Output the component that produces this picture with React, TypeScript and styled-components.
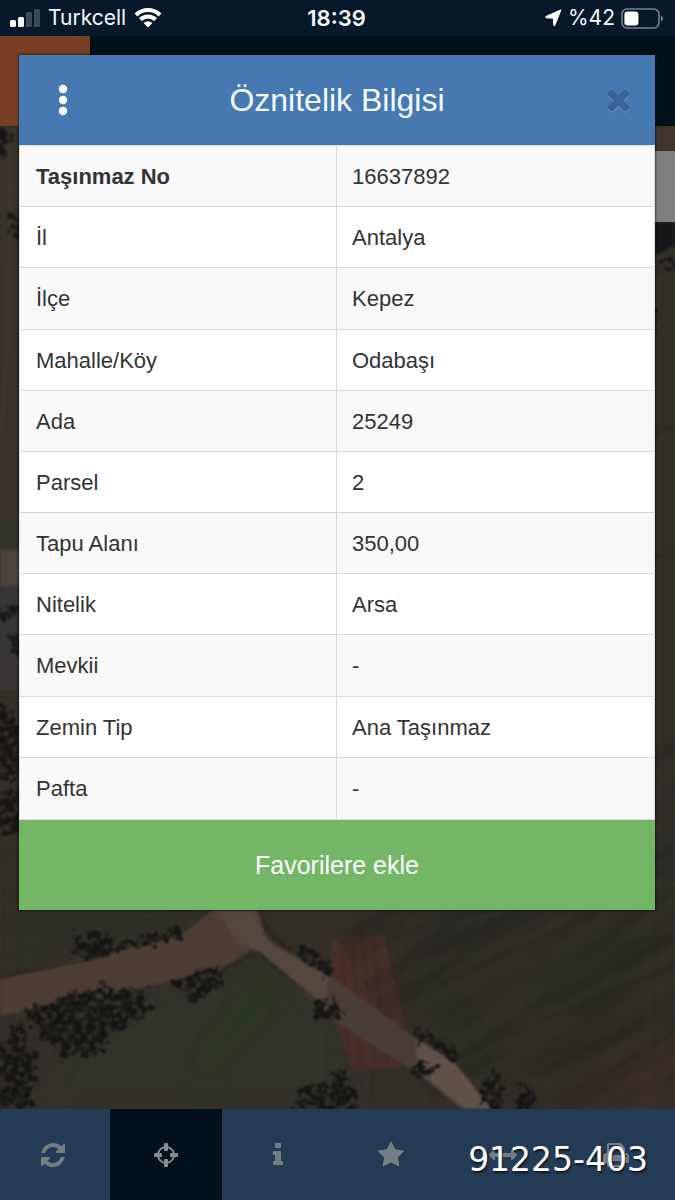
import React from "react";
import styled, { createGlobalStyle } from "styled-components";

const GlobalStyle = createGlobalStyle`
  *, *::before, *::after { box-sizing: border-box; }
  body {
    margin: 0;
    background: #02101b;
    font-family: "Liberation Sans", Arial, sans-serif;
  }
  button { font: inherit; border: 0; padding: 0; cursor: pointer; }
`;

const Screen = styled.div`
  position: relative;
  display: flex;
  flex-direction: column;
  min-height: 100vh;
  overflow: hidden;
`;

const StatusBar = styled.header`
  display: grid;
  grid-template-columns: 1fr auto 1fr;
  align-items: center;
  height: 36px;
  padding: 0 12px 0 10px;
  background: #06182a;
  color: #f4f8fb;
  font-family: Inter, sans-serif;
  font-size: 21px;
  line-height: 36px;
`;

const StatusGroup = styled.div<{ $end?: boolean }>`
  display: flex;
  align-items: center;
  gap: ${(p) => (p.$end ? 6 : 8)}px;
  justify-content: ${(p) => (p.$end ? "flex-end" : "flex-start")};
`;

const Clock = styled.time`
  font-size: 22px;
  font-weight: 600;
`;

const AppHeader = styled.div`
  height: 90px;
  background: #02101a;
`;

const HomeButton = styled.button`
  display: block;
  width: 90px;
  height: 90px;
  background: #793f25;
`;

const MapArea = styled.main`
  position: relative;
  flex: 1;
  display: flex;
  justify-content: flex-end;
  align-items: flex-start;
  padding-top: 25px;
  background: #332d29;
`;

const MapImage = styled.svg`
  position: absolute;
  inset: 0;
  width: 100%;
  height: 100%;
`;

const LayerButton = styled.button`
  position: relative;
  width: 70px;
  height: 71px;
  background: #808080;
`;

const Toolbar = styled.nav`
  overflow: hidden;
  background: #243b56;
`;

const ToolList = styled.div`
  display: grid;
  grid-template-columns: repeat(6, 1fr);
  height: 91px;
  margin: 0 3px 0 -3px;
`;

const ToolButton = styled.button<{ $active?: boolean }>`
  display: flex;
  align-items: center;
  justify-content: center;
  background: ${(p) => (p.$active ? "#02101b" : "transparent")};
  color: ${(p) => (p.$active ? "#868c91" : "#767c83")};
`;

const Overlay = styled.div`
  position: absolute;
  inset: 0;
  padding: 55px 20px 20px 19px;
`;

const Dialog = styled.section`
  background: #fff;
  box-shadow: 0 0 2px 1px rgba(0, 0, 0, 0.5);
`;

const DialogHeader = styled.div`
  display: grid;
  grid-template-columns: 88px 1fr 74px;
  align-items: center;
  height: 90px;
  background: #4678b2;
  color: #fff;
`;

const DialogTitle = styled.h1`
  margin: 0;
  padding-right: 14px;
  font-size: 32px;
  font-weight: 400;
  line-height: 40px;
  text-align: center;
  color: #f5faff;
`;

const IconButton = styled.button<{ $muted?: boolean }>`
  display: flex;
  align-items: center;
  justify-content: center;
  height: 90px;
  padding-bottom: ${(p) => (p.$muted ? 2 : 0)}px;
  background: transparent;
  color: ${(p) => (p.$muted ? "#3b6396" : "#fff")};
  filter: ${(p) => (p.$muted ? "drop-shadow(0 1px 0 #6d98c6)" : "none")};
`;

const TableFrame = styled.div`
  border: 1px solid #ddd;
`;

const Table = styled.table`
  width: 100%;
  height: 673px;
  table-layout: fixed;
  border-collapse: separate;
  border-spacing: 0;
  font-size: 22px;
  line-height: 30px;
  color: #333;
`;

const Row = styled.tr`
  &:nth-child(odd) { background: #f9f9f9; }
  &:last-child > * { border-bottom-color: transparent; }
`;

const Label = styled.th<{ $bold?: boolean }>`
  height: 61px;
  padding: 2px 16px 0;
  border-right: 1px solid #d9d9d9;
  border-bottom: 1px solid #d9d9d9;
  text-align: left;
  font-weight: ${(p) => (p.$bold ? 700 : 400)};
`;

const Value = styled.td`
  height: 61px;
  padding: 2px 15px 0;
  border-bottom: 1px solid #d9d9d9;
`;

const FavouriteButton = styled.button`
  display: block;
  width: 100%;
  height: 90px;
  background: #73b766;
  color: #fff;
  && { font-size: 25px; }
`;

const ListingNumber = styled.div`
  position: absolute;
  right: 27px;
  bottom: 20px;
  color: #fff;
  font-family: "DejaVu Sans", sans-serif;
  font-size: 33px;
  line-height: 40px;
  text-shadow: 1px 2px 2px rgba(0, 0, 0, 0.6);
`;

const ICONS = {
  refresh:
    "M1639 1056q0 5-1 7-64 268-268 434.5t-478 166.5q-146 0-282.5-55t-243.5-157l-129 129q-19 19-45 19t-45-19-19-45v-448q0-26 19-45t45-19h448q26 0 45 19t19 45-19 45l-137 137q71 66 161 102t187 36q134 0 250-65t186-179q11-17 53-117 8-23 30-23h192q13 0 22.5 9.5t9.5 22.5zm25-800v448q0 26-19 45t-45 19h-448q-26 0-45-19t-19-45 19-45l138-138q-148-137-349-137-134 0-250 65t-186 179q-11 17-53 117-8 23-30 23h-199q-13 0-22.5-9.5t-9.5-22.5v-7q65-268 270-434.5t480-166.5q146 0 284 55.5t245 156.5l130-129q19-19 45-19t45 19 19 45z",
  crosshairs:
    "M1325 1024h-109q-26 0-45-19t-19-45v-128q0-26 19-45t45-19h109q-32-108-112.5-188.5t-188.5-112.5v109q0 26-19 45t-45 19h-128q-26 0-45-19t-19-45v-109q-108 32-188.5 112.5t-112.5 188.5h109q26 0 45 19t19 45v128q0 26-19 45t-45 19h-109q32 108 112.5 188.5t188.5 112.5v-109q0-26 19-45t45-19h128q26 0 45 19t19 45v109q108-32 188.5-112.5t112.5-188.5zm339-192v128q0 26-19 45t-45 19h-143q-37 161-154.5 278.5t-278.5 154.5v143q0 26-19 45t-45 19h-128q-26 0-45-19t-19-45v-143q-161-37-278.5-154.5t-154.5-278.5h-143q-26 0-45-19t-19-45v-128q0-26 19-45t45-19h143q37-161 154.5-278.5t278.5-154.5v-143q0-26 19-45t45-19h128q26 0 45 19t19 45v143q161 37 278.5 154.5t154.5 278.5h143q26 0 45 19t19 45z",
  info:
    "M1216 1344v128q0 26-19 45t-45 19h-512q-26 0-45-19t-19-45v-128q0-26 19-45t45-19h64v-384h-64q-26 0-45-19t-19-45v-128q0-26 19-45t45-19h384q26 0 45 19t19 45v576h64q26 0 45 19t19 45zm-128-1152v192q0 26-19 45t-45 19h-256q-26 0-45-19t-19-45v-192q0-26 19-45t45-19h256q26 0 45 19t19 45z",
  star:
    "M1728 647q0 22-26 48l-363 354 86 500q1 7 1 20 0 21-10.5 35.5t-30.5 14.5q-19 0-40-12l-449-236-449 236q-22 12-40 12-21 0-31.5-14.5t-10.5-35.5q0-6 2-20l86-500-364-354q-25-27-25-48 0-37 56-46l502-73 225-455q19-41 49-41t49 41l225 455 502 73q56 9 56 46z",
  arrows:
    "M1792 896q0 26-19 45l-256 256q-19 19-45 19t-45-19-19-45v-128h-1024v128q0 26-19 45t-45 19-45-19l-256-256q-19-19-19-45t19-45l256-256q19-19 45-19t45 19 19 45v128h1024v-128q0-26 19-45t45-19 45 19l256 256q19 19 19 45z",
  print:
    "M448 1536h896v-256h-896v256zm0-640h896v-384h-160q-40 0-68-28t-28-68v-160h-640v640zm1152 64q0-26-19-45t-45-19-45 19-19 45 19 45 45 19 45-19 19-45zm128 0v416q0 13-9.5 22.5t-22.5 9.5h-224v160q0 40-28 68t-68 28h-960q-40 0-68-28t-28-68v-160h-224q-13 0-22.5-9.5t-9.5-22.5v-416q0-79 56.5-135.5t135.5-56.5h64v-544q0-40 28-68t68-28h672q40 0 88 20t76 48l152 152q28 28 48 76t20 88v256h64q79 0 135.5 56.5t56.5 135.5z",
  times:
    "M1490 1322q0 40-28 68l-136 136q-28 28-68 28t-68-28l-294-294-294 294q-28 28-68 28t-68-28l-136-136q-28-28-28-68t28-68l294-294-294-294q-28-28-28-68t28-68l136-136q28-28 68-28t68 28l294 294 294-294q28-28 68-28t68 28l136 136q28 28 28 68t-28 68l-294 294 294 294q28 28 28 68z",
};

type IconName = keyof typeof ICONS;

function Icon({ name, size = 28 }: { name: IconName; size?: number }) {
  return (
    <svg width={size} height={size} viewBox="0 0 1792 1792" fill="currentColor" aria-hidden="true">
      <path d={ICONS[name]} />
    </svg>
  );
}

const TOOLS: { icon: IconName; label: string; active?: boolean }[] = [
  { icon: "refresh", label: "Yenile" },
  { icon: "crosshairs", label: "Konum", active: true },
  { icon: "info", label: "Bilgi" },
  { icon: "star", label: "Favoriler" },
  { icon: "arrows", label: "Ölçüm" },
  { icon: "print", label: "Yazdır" },
];

const ATTRIBUTES = [
  ["Taşınmaz No", "16637892"],
  ["İl", "Antalya"],
  ["İlçe", "Kepez"],
  ["Mahalle/Köy", "Odabaşı"],
  ["Ada", "25249"],
  ["Parsel", "2"],
  ["Tapu Alanı", "350,00"],
  ["Nitelik", "Arsa"],
  ["Mevkii", "-"],
  ["Zemin Tip", "Ana Taşınmaz"],
  ["Pafta", "-"],
];

function SignalIcon() {
  return (
    <svg width="30" height="20" viewBox="0 0 30 20" aria-hidden="true">
      <rect x="0" y="12" width="6" height="7" rx="1.6" fill="#fff" />
      <rect x="8" y="9" width="6" height="10" rx="1.6" fill="#fff" />
      <rect x="16" y="4" width="6" height="15" rx="1.6" fill="#3b4a58" />
      <rect x="24" y="1" width="6" height="18" rx="1.6" fill="#3b4a58" />
    </svg>
  );
}

function WifiIcon() {
  return (
    <svg width="28" height="20" viewBox="0 0 28 20" fill="none" stroke="#fff" strokeWidth="4" aria-hidden="true">
      <path d="M2 7A17 17 0 0 1 26 7" />
      <path d="M6.4 11.6A10.8 10.8 0 0 1 21.6 11.6" />
      <path d="M9.6 15A6.2 6.2 0 0 1 18.4 15L14 19.6Z" fill="#fff" stroke="none" />
    </svg>
  );
}

function LocationIcon() {
  return (
    <svg width="17" height="18" viewBox="0 0 17 18" aria-hidden="true">
      <path
        d="M16 .8L.8 7.6Q.4 8.6 1.4 8.8L8.4 9.2L8.8 16.4Q9.2 17.4 9.8 16.4Z"
        fill="#fff"
        stroke="#fff"
        strokeWidth="1"
        strokeLinejoin="round"
      />
    </svg>
  );
}

function BatteryIcon() {
  return (
    <svg width="42" height="21" viewBox="0 0 42 21" aria-hidden="true">
      <rect x="1" y="1" width="37" height="19" rx="5" fill="none" stroke="#77828c" strokeWidth="1.6" />
      <rect x="3.4" y="3.6" width="14" height="14" rx="3" fill="#fff" />
      <path d="M40 7.4Q42 8.4 42 10.5T40 13.6Z" fill="#77828c" />
    </svg>
  );
}

function SatelliteMap() {
  return (
    <MapImage viewBox="0 126 675 983" preserveAspectRatio="xMidYMax slice" aria-hidden="true">
      <defs>
        <filter id="soft" x="-20%" y="-20%" width="140%" height="140%">
          <feGaussianBlur stdDeviation="16" />
        </filter>
        <filter id="edge" x="-5%" y="-5%" width="110%" height="110%">
          <feGaussianBlur stdDeviation="1.6" />
        </filter>
        <filter id="bush" x="-5%" y="-5%" width="110%" height="110%" colorInterpolationFilters="sRGB">
          <feTurbulence type="fractalNoise" baseFrequency="0.09" numOctaves="3" seed="4" result="warp" />
          <feDisplacementMap in="SourceGraphic" in2="warp" scale="22" xChannelSelector="R" yChannelSelector="G" result="shape" />
          <feTurbulence type="fractalNoise" baseFrequency="0.16" numOctaves="2" seed="21" />
          <feColorMatrix values="0 0 0 0 0  0 0 0 0 0  0 0 0 0 0  4.5 0 0 0 -1.5" result="leaves" />
          <feComposite in="shape" in2="leaves" operator="in" />
          <feGaussianBlur stdDeviation="1.1" />
        </filter>
        <filter id="grain" x="0" y="0" width="100%" height="100%" colorInterpolationFilters="sRGB">
          <feTurbulence type="fractalNoise" baseFrequency="0.008 0.07" numOctaves="3" seed="9" />
          <feColorMatrix values="0 0 0 0 0.08  0 0 0 0 0.1  0 0 0 0 0.08  1.6 0 0 0 -0.6" />
          <feGaussianBlur stdDeviation="1" />
        </filter>
      </defs>
      <rect y="126" width="675" height="983" fill="#342e29" />
      <rect x="640" y="126" width="35" height="26" fill="#40342f" />

      {/* ground seen beside the dialog */}
      <g filter="url(#edge)">
        <path d="M0 126H24V540H0Z" fill="#39322c" />
        <path d="M0 520H24V550H0Z" fill="#30332b" />
        <path d="M0 550H24V586H0Z" fill="#4c423d" />
        <path d="M0 586H24V690H0Z" fill="#393434" />
        <path d="M9 126Q14 280 1 430" stroke="#413a32" strokeWidth="2" fill="none" />
        <path d="M645 222H675V246L655 256H645Z" fill="#161817" />
        <path d="M645 436L675 425M645 562L675 550" stroke="#26221f" strokeWidth="2" />
      </g>
      <g filter="url(#bush)" fill="#151414">
        <ellipse cx="2" cy="142" rx="8" ry="14" />
        <ellipse cx="16" cy="226" rx="6" ry="12" />
        <ellipse cx="8" cy="612" rx="12" ry="7" />
        <ellipse cx="16" cy="645" rx="5" ry="14" />
        <ellipse cx="6" cy="745" rx="16" ry="38" />
        <ellipse cx="10" cy="812" rx="14" ry="24" />
        <ellipse cx="670" cy="265" rx="15" ry="5" />
        <ellipse cx="655" cy="320" rx="4" ry="12" />
      </g>

      {/* fields */}
      <g filter="url(#soft)">
        <path d="M0 880H240L220 925L0 975Z" fill="#2e2e26" />
        <path d="M20 1100L110 1000L250 955L350 1020L345 1109H20Z" fill="#31322a" />
        <path d="M268 958L290 990L215 1075L180 1070L220 1020Z" fill="#293422" />
        <path d="M380 900H675V1109H510L400 990Z" fill="#332d28" />
        <path d="M395 950L480 890H600L440 960Z" fill="#2a2c25" />
        <path d="M520 995L620 930L660 945L560 1010Z" fill="#272e24" />
        <path d="M415 985L440 990L495 1060L480 1075Z" fill="#283024" />
        <path d="M675 1030L530 1109H675Z" fill="#3b2d28" />
      </g>
      <path d="M332 940L383 934L408 1040L400 1068L352 1068L328 1000Z" fill="#462f29" filter="url(#edge)" />
      <g stroke="#3b2722" strokeWidth="2" opacity="0.6" filter="url(#edge)">
        <path d="M342 940L348 1065M352 939L361 1066M362 938L375 1062M372 937L388 1060" />
      </g>
      <g transform="rotate(-30 540 1000)">
        <rect x="395" y="840" width="400" height="330" filter="url(#grain)" opacity="0.4" />
      </g>
      <g stroke="#1f221d" strokeWidth="2" opacity="0.4" filter="url(#edge)">
        <path d="M420 960L520 906M440 985L600 910M560 1000L675 936M450 1060L675 965M540 1075L675 1004" />
      </g>

      {/* roads */}
      <g filter="url(#edge)">
        <path d="M0 978L70 961L180 936L216 908H260L264 940L244 954L215 972L80 1000L0 1016Z" fill="#4d3e35" />
        <path d="M216 908H254Q260 935 276 946L330 976L415 1038L450 1060L490 1109H462L420 1074L340 1024L306 995L264 956L236 940Z" fill="#53463f" />
        <path d="M330 976L415 1038L417 1071L340 1024L322 1008Z" fill="#4a3d39" />
        <path d="M418 1040L453 1061L492 1109H467L417 1071Z" fill="#5e5148" />
        <path d="M0 978L110 955M220 972L258 952L318 1002M258 908Q266 935 292 951" fill="none" stroke="#231f1b" strokeWidth="2" />
      </g>

      {/* hedges and shrubs */}
      <g filter="url(#bush)" fill="#131413">
        <ellipse cx="93" cy="945" rx="20" ry="15" />
        <path d="M110 946L178 926L182 938L112 955Z" />
        <path d="M26 1012L95 986L145 990L154 1010L114 1035L92 1060L62 1056L40 1038Z" />
        <path d="M172 980L218 966L224 985L190 1004Z" />
        <path d="M0 1040L22 1020L36 1060L30 1109H0Z" />
        <path d="M300 1090L345 1074L362 1109H294Z" />
        <ellipse cx="328" cy="1010" rx="14" ry="11" />
        <path d="M294 945L332 962L327 978L298 958Z" />
        <path d="M412 1026L462 1050L456 1064L418 1038Z" />
        <ellipse cx="494" cy="1092" rx="11" ry="18" />
        <ellipse cx="526" cy="1100" rx="10" ry="16" />
        <ellipse cx="423" cy="1070" rx="12" ry="7" />
      </g>
    </MapImage>
  );
}

export default function App() {
  return (
    <Screen>
      <GlobalStyle />
      <StatusBar>
        <StatusGroup>
          <SignalIcon />
          <span>Turkcell</span>
          <WifiIcon />
        </StatusGroup>
        <Clock>18:39</Clock>
        <StatusGroup $end>
          <LocationIcon />
          <span>%42</span>
          <BatteryIcon />
        </StatusGroup>
      </StatusBar>
      <AppHeader>
        <HomeButton aria-label="Ana sayfa" />
      </AppHeader>
      <MapArea>
        <SatelliteMap />
        <LayerButton aria-label="Katmanlar" />
      </MapArea>
      <Toolbar>
        <ToolList>
          {TOOLS.map((t) => (
            <ToolButton key={t.icon} $active={t.active} aria-label={t.label}>
              <Icon name={t.icon} />
            </ToolButton>
          ))}
        </ToolList>
      </Toolbar>

      <Overlay>
        <Dialog role="dialog" aria-labelledby="dialog-title">
          <DialogHeader>
            <IconButton aria-label="Menü">
              <svg width="10" height="32" viewBox="0 0 10 32" fill="currentColor" aria-hidden="true">
                <circle cx="5" cy="5" r="4.2" />
                <circle cx="5" cy="16" r="4.2" />
                <circle cx="5" cy="27" r="4.2" />
              </svg>
            </IconButton>
            <DialogTitle id="dialog-title">Öznitelik Bilgisi</DialogTitle>
            <IconButton $muted aria-label="Kapat">
              <Icon name="times" size={33} />
            </IconButton>
          </DialogHeader>
          <TableFrame>
            <Table>
              <tbody>
                {ATTRIBUTES.map(([label, value], i) => (
                  <Row key={label}>
                    <Label scope="row" $bold={i === 0}>{label}</Label>
                    <Value>{value}</Value>
                  </Row>
                ))}
              </tbody>
            </Table>
          </TableFrame>
          <FavouriteButton>Favorilere ekle</FavouriteButton>
        </Dialog>
      </Overlay>
      <ListingNumber>91225-403</ListingNumber>
    </Screen>
  );
}
